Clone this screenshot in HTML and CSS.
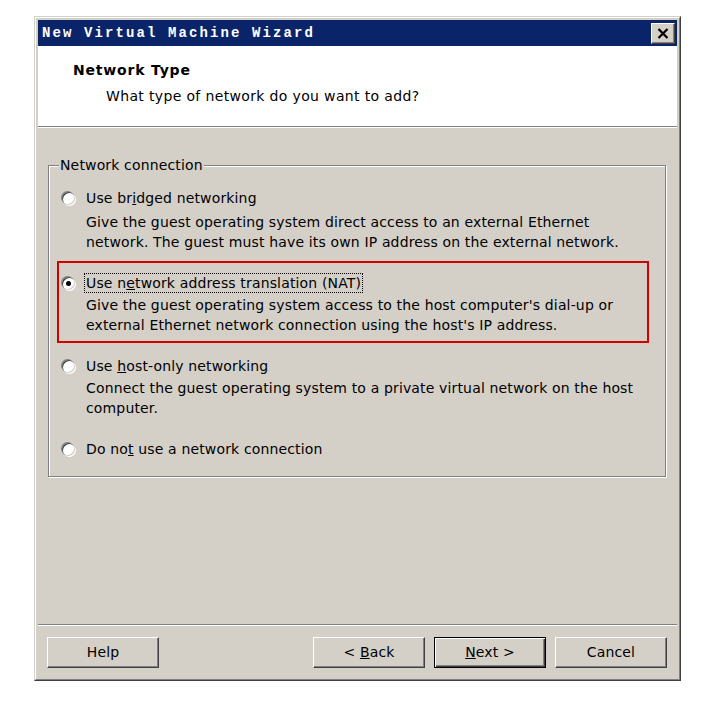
FILE: index.html
```html
<!DOCTYPE html>
<html>
<head>
<meta charset="utf-8">
<title>New Virtual Machine Wizard</title>
<link rel="stylesheet" href="styles.css">
</head>
<body>
<div class="window">
  <div class="frame">
    <div class="titlebar">
      <span class="title">New Virtual Machine Wizard</span>
      <span class="close"><svg width="12" height="11" viewBox="0 0 12 11"><path d="M1.5 1 L10.5 10 M10.5 1 L1.5 10" stroke="#000" stroke-width="2.2" fill="none"/></svg></span>
    </div>
    <div class="header">
      <div class="h-title">Network Type</div>
      <div class="h-sub">What type of network do you want to add?</div>
    </div>
    <div class="content">
      <fieldset class="group">
        <legend>Network connection</legend>
        <div class="option">
          <div class="opt-row"><span class="radio"></span><span class="label">Use br<u>i</u>dged networking</span></div>
          <div class="desc">Give the guest operating system direct access to an external Ethernet<br>network. The guest must have its own IP address on the external network.</div>
        </div>
        <div class="option highlight">
          <div class="opt-row"><span class="radio checked"></span><span class="label focus">Use n<u>e</u>twork address translation (NAT)</span></div>
          <div class="desc">Give the guest operating system access to the host computer's dial-up or<br>external Ethernet network connection using the host's IP address.</div>
        </div>
        <div class="option">
          <div class="opt-row"><span class="radio"></span><span class="label">Use <u>h</u>ost-only networking</span></div>
          <div class="desc">Connect the guest operating system to a private virtual network on the host<br>computer.</div>
        </div>
        <div class="option">
          <div class="opt-row"><span class="radio"></span><span class="label">Do no<u>t</u> use a network connection</span></div>
        </div>
      </fieldset>
    </div>
    <div class="footer">
      <span class="btn"><span>Help</span></span>
      <span class="btn push"><span>&lt; <u>B</u>ack</span></span>
      <span class="btn default"><span><u>N</u>ext &gt;</span></span>
      <span class="btn"><span>Cancel</span></span>
    </div>
  </div>
</div>
</body>
</html>
```

FILE: styles.css
```css
html, body {
  margin: 0;
  padding: 0;
  background: #ffffff;
}

body {
  padding: 16px 0 0 34px;
  font-family: "DejaVu Sans", "Noto Sans", sans-serif;
  font-size: 14px;
  letter-spacing: 0.15px;
  color: #000;
}

.window {
  box-sizing: border-box;
  width: 647px;
  height: 665px;
  background: #d4d0c8;
  border: 1px solid;
  border-color: #d4d0c8 #404040 #404040 #d4d0c8;
}

.frame {
  box-sizing: border-box;
  height: 100%;
  border: 1px solid;
  border-color: #ffffff #808080 #808080 #ffffff;
  padding: 2px;
  display: flex;
  flex-direction: column;
}

.titlebar {
  height: 26px;
  background: #0a246a;
  display: flex;
  align-items: center;
  justify-content: space-between;
  padding: 0 2px 0 4px;
  flex: none;
}

.title {
  color: #fff;
  font-family: "Liberation Mono", "DejaVu Sans Mono", monospace;
  font-weight: bold;
  font-size: 14px;
  letter-spacing: 2.1px;
  white-space: nowrap;
}

.close {
  box-sizing: border-box;
  width: 24px;
  height: 21px;
  background: #d4d0c8;
  border: 1px solid;
  border-color: #ffffff #404040 #404040 #ffffff;
  box-shadow: inset -1px -1px 0 #808080;
  display: flex;
  align-items: center;
  justify-content: center;
}

.header {
  flex: none;
  background: #fff;
  border-bottom: 1px solid #808080;
  box-sizing: border-box;
  height: 81px;
  padding-top: 15px;
}

.h-title {
  font-weight: bold;
  line-height: 18px;
  padding-left: 35px;
  letter-spacing: 0.8px;
}

.h-sub {
  line-height: 18px;
  margin-top: 8px;
  padding-left: 68px;
  letter-spacing: 0.35px;
}

.content {
  flex: 1;
  border-top: 1px solid #fff;
  padding-top: 27px;
}

.group {
  margin: 0 11px 0 10px;
  padding: 5px 18px 11px 10px;
  border: 1px solid #808080;
  box-shadow: inset 1px 1px 0 #fff, 1px 1px 0 #fff;
  min-inline-size: 0;
}

.group legend {
  padding: 0 1px;
  line-height: 20px;
  background: #d4d0c8;
}

.option {
  padding: 10px 2px 6px;
}

.option:first-of-type {
  padding-top: 8px;
  padding-bottom: 6px;
}

.option + .option {
  margin-top: 5px;
}

.option.highlight {
  outline: 2px solid #d00000;
}

.opt-row {
  display: flex;
  align-items: center;
  height: 20px;
}

.radio {
  position: relative;
  box-sizing: border-box;
  width: 13px;
  height: 13px;
  margin: 0 9px 0 1px;
  border-radius: 50%;
  background: #fff;
  box-shadow: inset 1px 1px 0 #404040, inset -1px -1px 0 #d4d0c8, -1px -1px 0 #808080, 1px 1px 0 #fff;
  flex: none;
}

.radio.checked::after {
  content: "";
  position: absolute;
  left: 4px;
  top: 4px;
  width: 5px;
  height: 5px;
  border-radius: 50%;
  background: #000;
}

.label {
  line-height: 18px;
  padding: 0 1px;
  border: 1px dotted transparent;
  white-space: nowrap;
}

.label.focus {
  border-color: #000;
}

.desc {
  margin: 2px 0 0 25px;
  line-height: 20px;
  white-space: nowrap;
}

.option:first-of-type .desc {
  margin-top: 4px;
}

.footer {
  flex: none;
  display: flex;
  gap: 9px;
  border-top: 1px solid #808080;
  box-shadow: inset 0 1px 0 #fff;
  padding: 12px 10px 9px 9px;
}

.btn {
  box-sizing: border-box;
  width: 112px;
  height: 31px;
  display: flex;
  align-items: center;
  justify-content: center;
  background: #d4d0c8;
  border: 1px solid;
  border-color: #ffffff #404040 #404040 #ffffff;
  box-shadow: inset -1px -1px 0 #808080;
  padding-bottom: 1px;
}

.btn.push {
  margin-left: auto;
}

.btn.default {
  border: 1px solid #000;
  box-shadow: inset 1px 1px 0 #fff, inset -1px -1px 0 #404040, inset -2px -2px 0 #808080;
}
```
